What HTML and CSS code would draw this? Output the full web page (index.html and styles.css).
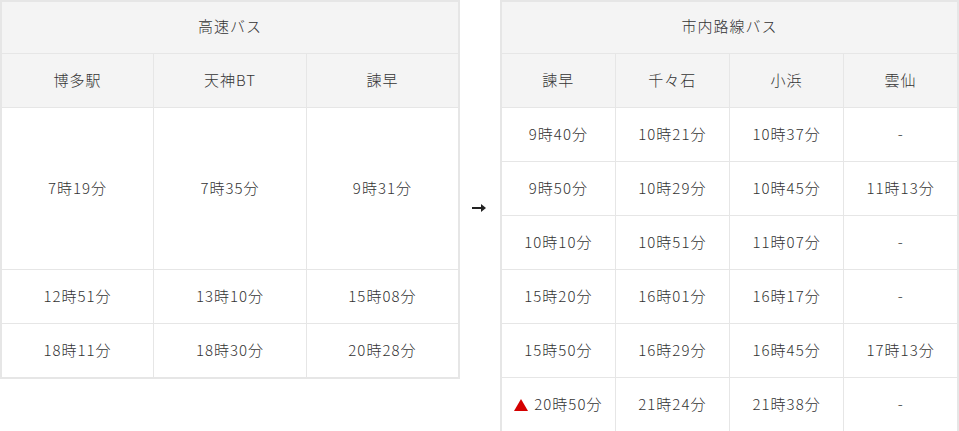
FILE: index.html
```html
<!DOCTYPE html>
<html lang="ja">
<head>
<meta charset="utf-8">
<link rel="stylesheet" href="styles.css">
</head>
<body>
<div class="wrap">
  <table class="tt tt-left">
    <thead>
      <tr class="top"><th colspan="3">高速バス</th></tr>
      <tr><th>博多駅</th><th>天神BT</th><th>諫早</th></tr>
    </thead>
    <tbody>
      <tr class="tall"><td>7時19分</td><td>7時35分</td><td>9時31分</td></tr>
      <tr><td>12時51分</td><td>13時10分</td><td>15時08分</td></tr>
      <tr><td>18時11分</td><td>18時30分</td><td>20時28分</td></tr>
    </tbody>
  </table>
  <div class="arrow">
    <svg width="16" height="10" viewBox="0 0 16 10"><path d="M0 5H12" stroke="#222" stroke-width="2"/><path d="M9 1L14 5L9 9Z" fill="#222"/></svg>
  </div>
  <table class="tt tt-right">
    <thead>
      <tr class="top"><th colspan="4">市内路線バス</th></tr>
      <tr><th>諫早</th><th>千々石</th><th>小浜</th><th>雲仙</th></tr>
    </thead>
    <tbody>
      <tr><td>9時40分</td><td>10時21分</td><td>10時37分</td><td>-</td></tr>
      <tr><td>9時50分</td><td>10時29分</td><td>10時45分</td><td>11時13分</td></tr>
      <tr><td>10時10分</td><td>10時51分</td><td>11時07分</td><td>-</td></tr>
      <tr><td>15時20分</td><td>16時01分</td><td>16時17分</td><td>-</td></tr>
      <tr><td>15時50分</td><td>16時29分</td><td>16時45分</td><td>17時13分</td></tr>
      <tr><td><span class="mark"></span>20時50分</td><td>21時24分</td><td>21時38分</td><td>-</td></tr>
    </tbody>
  </table>
</div>
</body>
</html>
```
FILE: styles.css
```css
html, body {
  margin: 0;
  padding: 0;
  background: #fff;
}
body {
  font-family: "Noto Sans CJK JP", "Noto Sans", sans-serif;
  font-size: 15px;
  font-weight: 300;
  letter-spacing: 1px;
  color: #333;
}
.wrap {
  display: flex;
  align-items: flex-start;
  width: 959px;
}
.tt {
  border-collapse: collapse;
  table-layout: fixed;
  border: 2px solid #e6e6e6;
}
.tt-left {
  width: 460px;
}
.tt-right {
  width: 459px;
}
.tt th,
.tt td {
  border: 1px solid #e6e6e6;
  height: 53px;
  padding: 0;
  text-align: center;
  vertical-align: middle;
  font-weight: 300;
  line-height: 20px;
}
.tt th {
  background: #f4f4f4;
}
.tt .top th {
  height: 52px;
  padding-bottom: 3px;
  box-sizing: border-box;
}
.tt .tall td {
  height: 161px;
}
.arrow {
  width: 40px;
  flex: none;
  display: flex;
  justify-content: center;
  padding-top: 203px;
}
.arrow svg {
  display: block;
}
.mark {
  display: inline-block;
  width: 0;
  height: 0;
  border-left: 7px solid transparent;
  border-right: 7px solid transparent;
  border-bottom: 12px solid #d40000;
  margin-right: 6px;
  vertical-align: -1px;
}
```
